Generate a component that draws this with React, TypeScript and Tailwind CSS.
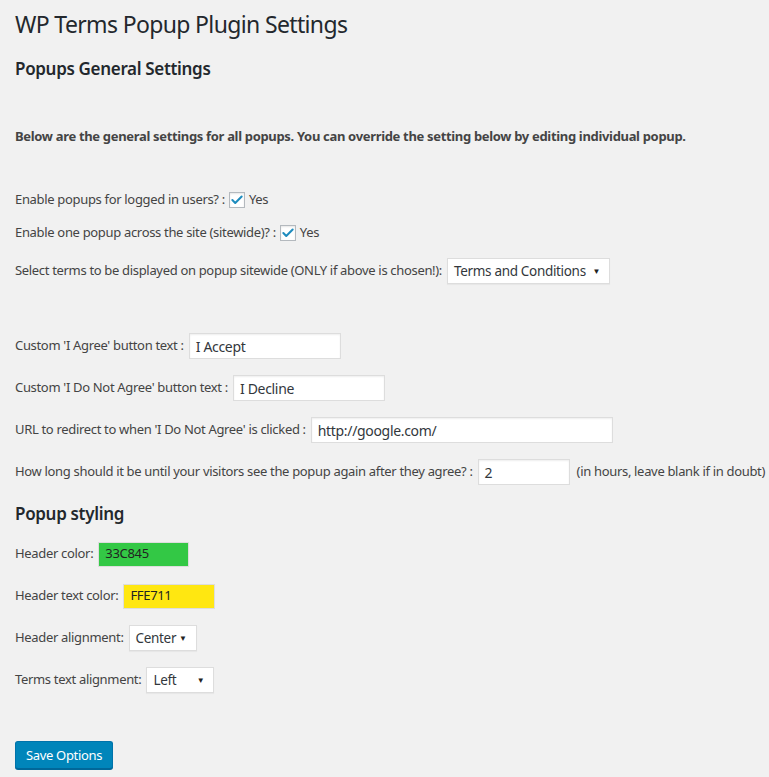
import { Check } from 'lucide-react';

const font = { fontFamily: '"Noto Sans", "Open Sans", sans-serif' };

function TextBox({ value, width }: { value: string; width: string }) {
  return (
    <div
      className={`${width} shrink-0 h-[26px] ml-[5px] flex items-center px-[6px] bg-white border border-[#dddddd] shadow-[inset_0_1px_2px_rgba(0,0,0,0.07)] text-[14px] text-[#32373c]`}
    >
      {value}
    </div>
  );
}

function SelectBox({ value, width }: { value: string; width: string }) {
  return (
    <div
      className={`${width} shrink-0 h-[26px] ml-[5px] flex items-center justify-between pl-[6px] pr-[9px] bg-white border border-[#dddddd] shadow-[0_1px_1px_rgba(0,0,0,0.04)] text-[13.5px] text-[#32373c]`}
    >
      <span>{value}</span>
      <span className="text-[8px] text-[#222]">▼</span>
    </div>
  );
}

function CheckBox() {
  return (
    <span className="shrink-0 mx-[4px] w-[16px] h-[16px] flex items-center justify-center bg-white border border-[#b4b9be] shadow-[inset_0_1px_2px_rgba(0,0,0,0.1)]">
      <Check size={14} strokeWidth={3.5} className="text-[#1e8cbe]" />
    </span>
  );
}

function Row({ children, className = 'mt-[16px]' }: { children: React.ReactNode; className?: string }) {
  return <div className={`flex items-center h-[26px] whitespace-nowrap ${className}`}>{children}</div>;
}

export default function App() {
  return (
    <div
      className="min-h-screen w-full bg-[#f1f1f1] text-[13px] tracking-[-0.025em] text-[#444444] px-[15px] pt-[10px] pb-[10px]"
      style={font}
    >
      <h1 className="text-[23px] leading-[29px] tracking-[-0.028em] text-[#23282d] font-normal">WP Terms Popup Plugin Settings</h1>
      <h2 className="mt-[19px] text-[17px] leading-[22px] font-semibold text-[#23282d]">Popups General Settings</h2>

      <p className="mt-[47px] leading-[18px] font-bold text-[#444]">
        Below are the general settings for all popups. You can override the setting below by editing individual popup.
      </p>

      <Row className="mt-[42px]">
        Enable popups for logged in users? :<CheckBox />Yes
      </Row>
      <Row className="mt-[7px]">
        Enable one popup across the site (sitewide)? :<CheckBox />Yes
      </Row>
      <Row className="mt-[12px]">
        Select terms to be displayed on popup sitewide (ONLY if above is chosen!):
        <SelectBox value="Terms and Conditions" width="w-[163px]" />
      </Row>

      <Row className="mt-[49px]">
        Custom 'I Agree' button text :<TextBox value="I Accept" width="w-[152px]" />
      </Row>
      <Row>
        Custom 'I Do Not Agree' button text :<TextBox value="I Decline" width="w-[152px]" />
      </Row>
      <Row>
        URL to redirect to when 'I Do Not Agree' is clicked :<TextBox value="http://google.com/" width="w-[302px]" />
      </Row>
      <Row>
        How long should it be until your visitors see the popup again after they agree? :
        <TextBox value="2" width="w-[92px]" />
        <span className="ml-[7px] shrink-0">(in hours, leave blank if in doubt)</span>
      </Row>

      <h2 className="mt-[18px] text-[17px] leading-[22px] font-semibold text-[#23282d]">Popup styling</h2>

      <Row>
        Header color:
        <div className="shrink-0 ml-[5px] w-[91px] h-[25px] flex items-center px-[6px] bg-[#33c845] border border-[#dddddd] text-[13px] text-[#222]">
          33C845
        </div>
      </Row>
      <Row>
        Header text color:
        <div className="shrink-0 ml-[5px] w-[92px] h-[25px] flex items-center px-[6px] bg-[#ffe711] border border-[#dddddd] text-[13px] text-[#222]">
          FFE711
        </div>
      </Row>
      <Row>
        Header alignment:
        <SelectBox value="Center" width="w-[68px]" />
      </Row>
      <Row>
        Terms text alignment:
        <SelectBox value="Left" width="w-[68px]" />
      </Row>

      <button className="mt-[48px] h-[28px] px-[10px] rounded-[3px] bg-[#0085ba] border border-[#0073aa] border-b-[#006799] shadow-[0_1px_0_#006799] text-white text-[13px] leading-[26px]">
        Save Options
      </button>
    </div>
  );
}
